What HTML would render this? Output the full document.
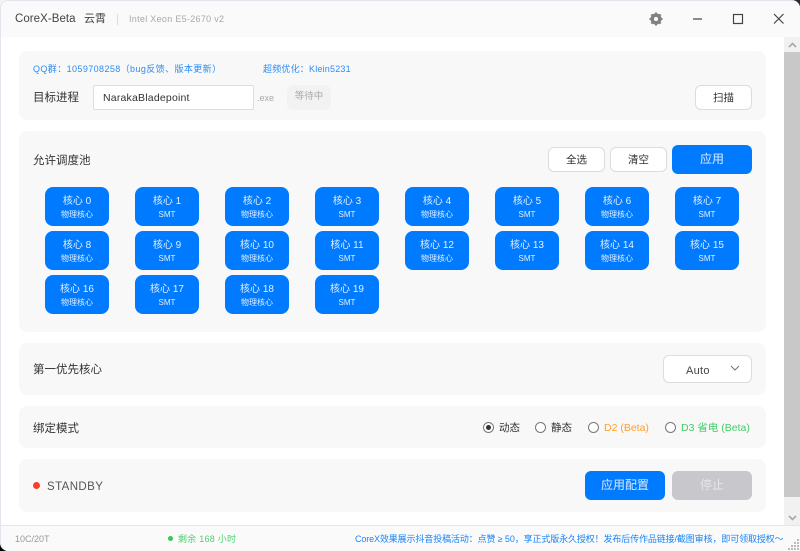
<!DOCTYPE html>
<html><head><meta charset="utf-8">
<style>
*{box-sizing:border-box;margin:0;padding:0}
html,body{width:800px;height:551px;overflow:hidden;background:#f4f4f8}
body{font-family:"Liberation Sans","Noto Sans CJK SC",sans-serif;position:relative}
.corner{position:absolute;width:12px;height:12px}
#win{position:absolute;left:0;top:0;width:800px;height:551px;background:#fff;border-radius:8px 8px 0 8px;overflow:hidden;border:1px solid #e3e4ec;border-right:none;border-bottom:none}
.a{position:absolute;white-space:nowrap}
.abs{position:absolute}
.panel{position:absolute;left:18px;width:747px;background:#f8f8f8;border-radius:8px}
.btn{position:absolute;background:#fff;border:1px solid #dcdcdc;border-radius:6px;color:#333;font-size:10.5px;display:flex;align-items:center;justify-content:center}
.core{position:absolute;width:64px;height:39px;background:#007aff;border-radius:8px;color:#e4f0ff;text-align:center}
.core .t{position:absolute;left:0;right:0;top:8px;font-size:10px;line-height:14px}
.core .s{position:absolute;left:0;right:0;top:22px;font-size:8px;line-height:12px}
.radio{position:absolute;width:11px;height:11px;border-radius:50%;border:1px solid #777;background:#fff}
.radio.on::after{content:"";position:absolute;left:2px;top:2px;width:5px;height:5px;border-radius:50%;background:#333}
</style></head><body>
<div class="corner" style="right:0;top:0;background:#2a2a30"></div>
<div class="corner" style="left:0;bottom:0;background:#000"></div>
<div id="win">
<div class="abs" style="left:-1px;top:-1px;width:801px;height:37px;background:#fafafa"></div>
<div class="a" style="left:14px;top:10px;font-size:11.5px;line-height:17px;color:#444;letter-spacing:.05px">CoreX-Beta</div>
<div class="a" style="left:83px;top:10px;font-size:11px;line-height:17px;color:#444">云霄</div>
<div class="abs" style="left:116px;top:13px;width:1px;height:11px;background:#ddd"></div>
<div class="a" style="left:128px;top:11px;font-size:9px;line-height:15px;color:#a8a8a8;letter-spacing:.3px">Intel Xeon E5-2670 v2</div>

<svg class="abs" style="left:-1px;top:-1px" width="800" height="36" viewBox="0 0 800 36">
<g fill="none">
<circle cx="656" cy="19" r="3.8" stroke="#808080" stroke-width="3.4"/>
<g stroke="#808080" stroke-width="2.2"><path d="M656 12.5v2.5M656 23v2.5M649.5 19h2.5M660 19h2.5M651.4 14.4l1.8 1.8M658.8 21.8l1.8 1.8M651.4 23.6l1.8-1.8M658.8 16.2l1.8-1.8"/></g>
<path d="M693 19h9" stroke="#666" stroke-width="1.4"/>
<rect x="733.5" y="14.5" width="9" height="9" stroke="#444" stroke-width="1.2"/>
<path d="M774 14l9.5 9.5M783.5 14l-9.5 9.5" stroke="#444" stroke-width="1.2"/>
</g></svg>

<!-- panel 1 -->
<div class="panel" style="top:50px;height:69px"></div>
<div class="a" style="left:32px;top:61px;font-size:9px;line-height:14px;color:#2a8cf5;letter-spacing:.4px">QQ群：1059708258（bug反馈、版本更新）</div>
<div class="a" style="left:262px;top:61px;font-size:9px;line-height:14px;color:#2a8cf5;letter-spacing:.2px">超频优化：Klein5231</div>
<div class="a" style="left:32px;top:89px;font-size:11.5px;line-height:16px;color:#333">目标进程</div>
<div class="abs" style="left:92px;top:84px;width:161px;height:25px;background:#fff;border:1px solid #dedede;border-radius:2px"></div>
<div class="a" style="left:102px;top:90px;font-size:10.5px;line-height:15px;color:#333;letter-spacing:.2px">NarakaBladepoint</div>
<div class="a" style="left:256px;top:91px;font-size:9px;line-height:13px;color:#aaa">.exe</div>
<div class="abs" style="left:286px;top:84px;width:44px;height:25px;background:#f2f2f3;border-radius:6px;color:#aaa;font-size:9.5px;line-height:23px;text-align:center">等待中</div>
<div class="btn" style="left:694px;top:84px;width:57px;height:25px">扫描</div>

<!-- panel 2 -->
<div class="panel" style="top:130px;height:201px"></div>
<div class="a" style="left:32px;top:152px;font-size:11.5px;line-height:17px;color:#333">允许调度池</div>
<div class="btn" style="left:547px;top:146px;width:57px;height:25px">全选</div>
<div class="btn" style="left:609px;top:146px;width:57px;height:25px">清空</div>
<div class="abs" style="left:671px;top:144px;width:80px;height:29px;background:#007aff;border-radius:6px;color:#dcebff;font-size:12px;line-height:29px;text-align:center">应用</div>

<div class="core" style="left:44px;top:186px"><div class="t">核心 0</div><div class="s">物理核心</div></div>
<div class="core" style="left:134px;top:186px"><div class="t">核心 1</div><div class="s">SMT</div></div>
<div class="core" style="left:224px;top:186px"><div class="t">核心 2</div><div class="s">物理核心</div></div>
<div class="core" style="left:314px;top:186px"><div class="t">核心 3</div><div class="s">SMT</div></div>
<div class="core" style="left:404px;top:186px"><div class="t">核心 4</div><div class="s">物理核心</div></div>
<div class="core" style="left:494px;top:186px"><div class="t">核心 5</div><div class="s">SMT</div></div>
<div class="core" style="left:584px;top:186px"><div class="t">核心 6</div><div class="s">物理核心</div></div>
<div class="core" style="left:674px;top:186px"><div class="t">核心 7</div><div class="s">SMT</div></div>

<div class="core" style="left:44px;top:230px"><div class="t">核心 8</div><div class="s">物理核心</div></div>
<div class="core" style="left:134px;top:230px"><div class="t">核心 9</div><div class="s">SMT</div></div>
<div class="core" style="left:224px;top:230px"><div class="t">核心 10</div><div class="s">物理核心</div></div>
<div class="core" style="left:314px;top:230px"><div class="t">核心 11</div><div class="s">SMT</div></div>
<div class="core" style="left:404px;top:230px"><div class="t">核心 12</div><div class="s">物理核心</div></div>
<div class="core" style="left:494px;top:230px"><div class="t">核心 13</div><div class="s">SMT</div></div>
<div class="core" style="left:584px;top:230px"><div class="t">核心 14</div><div class="s">物理核心</div></div>
<div class="core" style="left:674px;top:230px"><div class="t">核心 15</div><div class="s">SMT</div></div>

<div class="core" style="left:44px;top:274px"><div class="t">核心 16</div><div class="s">物理核心</div></div>
<div class="core" style="left:134px;top:274px"><div class="t">核心 17</div><div class="s">SMT</div></div>
<div class="core" style="left:224px;top:274px"><div class="t">核心 18</div><div class="s">物理核心</div></div>
<div class="core" style="left:314px;top:274px"><div class="t">核心 19</div><div class="s">SMT</div></div>

<!-- panel 3 -->
<div class="panel" style="top:342px;height:52px"></div>
<div class="a" style="left:32px;top:361px;font-size:11.5px;line-height:17px;color:#333">第一优先核心</div>
<div class="abs" style="left:662px;top:354px;width:89px;height:28px;background:#fff;border:1px solid #dcdcdc;border-radius:6px"></div>
<div class="a" style="left:685px;top:362px;font-size:11px;line-height:16px;color:#444;letter-spacing:.3px">Auto</div>
<svg class="abs" style="left:729px;top:364px" width="10" height="7"><path d="M1 1l4 4 4-4" fill="none" stroke="#777" stroke-width="1.1"/></svg>

<!-- panel 4 -->
<div class="panel" style="top:405px;height:42px"></div>
<div class="a" style="left:32px;top:420px;font-size:11.5px;line-height:17px;color:#333">绑定模式</div>
<div class="radio on" style="left:482px;top:421px"></div>
<div class="a" style="left:498px;top:420px;font-size:10.5px;line-height:15px;color:#333">动态</div>
<div class="radio" style="left:534px;top:421px"></div>
<div class="a" style="left:550px;top:420px;font-size:10.5px;line-height:15px;color:#333">静态</div>
<div class="radio" style="left:587px;top:421px"></div>
<div class="a" style="left:603px;top:420px;font-size:10.5px;line-height:15px;color:#ff9f2e">D2 (Beta)</div>
<div class="radio" style="left:664px;top:421px"></div>
<div class="a" style="left:680px;top:420px;font-size:10.5px;line-height:15px;color:#3fcf63">D3 省电 (Beta)</div>

<!-- panel 5 -->
<div class="panel" style="top:458px;height:53px"></div>
<div class="abs" style="left:32px;top:481px;width:7px;height:7px;border-radius:50%;background:#ff3b30"></div>
<div class="a" style="left:46px;top:478px;font-size:11.5px;line-height:17px;color:#555;letter-spacing:.4px">STANDBY</div>
<div class="abs" style="left:584px;top:470px;width:80px;height:29px;background:#007aff;border-radius:6px;color:#dcebff;font-size:12px;line-height:29px;text-align:center">应用配置</div>
<div class="abs" style="left:671px;top:470px;width:80px;height:29px;background:#c7c7cc;border-radius:6px;color:#e8e8ea;font-size:12px;line-height:29px;text-align:center">停止</div>

<!-- scrollbar -->
<div class="abs" style="left:783px;top:36px;width:17px;height:489px;background:#f1f1f1"></div>
<div class="abs" style="left:783px;top:51px;width:17px;height:445px;background:#c8c8c8"></div>
<svg class="abs" style="left:783px;top:36px" width="17" height="15"><path d="M5 10l3.5-3.5L12 10" fill="none" stroke="#a8a8a8" stroke-width="1.6"/></svg>
<svg class="abs" style="left:783px;top:510px" width="17" height="15"><path d="M5 5l3.5 3.5L12 5" fill="none" stroke="#a8a8a8" stroke-width="1.6"/></svg>

<!-- status bar -->
<div class="abs" style="left:-1px;top:524px;width:801px;height:27px;background:#fafafa;border-top:1px solid #e6e6e6"></div>
<div class="a" style="left:14px;top:532px;font-size:9px;line-height:13px;color:#999">10C/20T</div>
<div class="abs" style="left:167px;top:535px;width:5px;height:5px;border-radius:50%;background:#34c759"></div>
<div class="a" style="left:177px;top:532px;font-size:9px;line-height:13px;color:#4fd072;letter-spacing:.25px">剩余 168 小时</div>
<div class="a" style="left:354px;top:532px;font-size:9px;line-height:13px;color:#1a84f5;letter-spacing:-.12px">CoreX效果展示抖音投稿活动：点赞 ≥ 50，享正式版永久授权！发布后传作品链接/截图审核，即可领取授权～</div>
<svg class="abs" style="left:787px;top:537px" width="12" height="13"><g fill="#bbb"><rect x="9" y="1" width="2" height="2"/><rect x="6" y="4" width="2" height="2"/><rect x="9" y="4" width="2" height="2"/><rect x="3" y="7" width="2" height="2"/><rect x="6" y="7" width="2" height="2"/><rect x="9" y="7" width="2" height="2"/><rect x="0" y="10" width="2" height="2"/><rect x="3" y="10" width="2" height="2"/><rect x="6" y="10" width="2" height="2"/><rect x="9" y="10" width="2" height="2"/></g></svg>
</div>
</body></html>
